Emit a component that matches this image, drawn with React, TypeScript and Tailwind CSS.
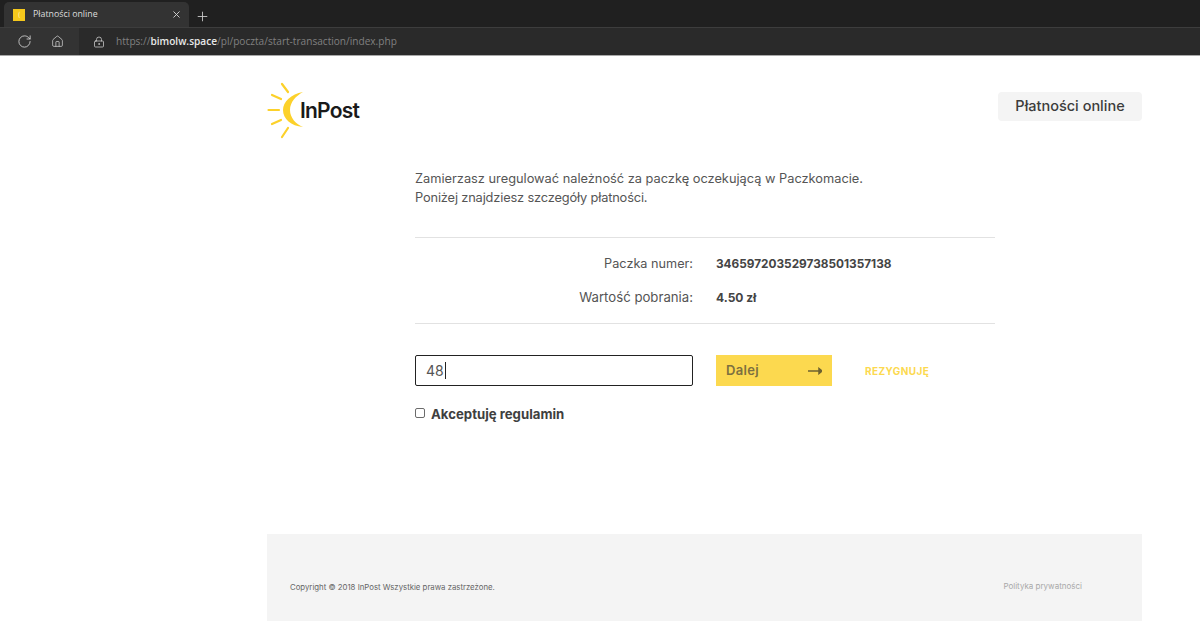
import React from "react";
import { RotateCw, Home, X, Plus, LockKeyhole } from "lucide-react";

const P = "font-['Inter','Liberation_Sans',sans-serif]";

function Logo() {
  return (
    <div className="relative w-[94px] h-[58px] flex items-center">
      <svg width="40" height="58" viewBox="0 0 40 58" className="shrink-0">
        <g stroke="#fcd12a" strokeWidth="2.2" strokeLinecap="round">
          <path d="M15 2 L21 10" />
          <path d="M5 13 L14 17" />
          <path d="M1.500 28 L12 28" />
          <path d="M5 42 L14 38" />
          <path d="M15 55 L21 46" />
        </g>
        <path d="M36 10 C24 12 16 20 16 28 C16 37 24 44 36 45 C29 42 23 36 23 28 C23 20 29 14 36 10 Z" fill="#fcd12a" />
      </svg>
      <span className="absolute left-[33px] top-[14px] text-[21px] leading-[30px] font-semibold tracking-[-0.8px] text-[#1a1a1a] font-['Inter',sans-serif]">InPost</span>
    </div>
  );
}

export default function App() {
  return (
    <div className={`${P} h-[621px] w-[1200px] overflow-hidden bg-white flex flex-col`}>
      <div className="h-[27px] bg-[#202020] flex items-end pl-[4px] shrink-0">
        <div className="h-[25px] w-[185px] bg-[#333333] rounded-t-[5px] flex items-center pl-[9px] pr-[7px]">
          <div className="w-[12px] h-[12px] bg-[#f5c81c] flex items-center justify-center text-[7px] leading-none text-[#fff2b0]">(</div>
          <span className="ml-[8px] text-[8.8px] text-[#dedede] font-['Open_Sans',sans-serif] flex-1">Płatności online</span>
          <X size={11} className="text-[#d8d8d8]" />
        </div>
        <Plus size={15} strokeWidth={1.4} className="text-[#cccccc] ml-[6px] mb-[3px]" />
      </div>
      <div className="h-[29px] bg-[#2d2d2d] flex items-center shrink-0 border-t border-[#3d3d3d] border-b-[1px] border-b-[#a8a8a8]">
        <div className="h-full w-[79px] bg-[#333333] flex items-center shrink-0">
          <RotateCw size={15} strokeWidth={1.4} className="text-[#d0d0d0] ml-[17px]" />
          <Home size={13} strokeWidth={1.4} className="text-[#d0d0d0] ml-[19px]" />
        </div>
        <div className="h-full flex-1 bg-[#2a2a2a] flex items-center pl-[14px]">
          <LockKeyhole size={12} strokeWidth={1.5} className="text-[#d0d0d0]" />
          <span className="ml-[11px] text-[10.1px] text-[#808080] font-['Open_Sans',sans-serif]">
            https://<span className="text-[#e8e8e8] font-semibold">bimolw.space</span>/pl/poczta/start-transaction/index.php
          </span>
        </div>
      </div>

      <div className="w-[875px] ml-[267px] flex flex-col flex-1">
        <div className="flex items-start justify-between mt-[26px] h-[58px]">
          <Logo />
          <div className="mt-[10px] w-[144px] h-[29px] pb-[1px] rounded-[4px] bg-[#f4f4f4] flex items-center justify-center text-[14.5px] font-medium text-[#3c3c3c]">
            Płatności online
          </div>
        </div>

        <div className="ml-[148px] w-[580px] flex flex-col mt-[29px]">
          <p className="text-[12.8px] leading-[19px] text-[#555555]">
            <span className="block">Zamierzasz uregulować należność za paczkę oczekującą w Paczkomacie.</span>
            <span className="block tracking-[-0.15px]">Poniżej znajdziesz szczegóły płatności.</span>
          </p>
          <div className="mt-[30px] border-t border-[#e2e2e2] pt-[17px] pb-[16px] border-b">
            <div className="flex items-center h-[18px]">
              <span className="w-[278px] text-right text-[12.7px] text-[#555555]">Paczka numer:</span>
              <span className="ml-[23px] pt-[1px] text-[11.8px] font-bold text-[#444]">346597203529738501357138</span>
            </div>
            <div className="flex items-center h-[18px] mt-[16px]">
              <span className="w-[278px] text-right text-[13.2px] text-[#555555]">Wartość pobrania:</span>
              <span className="ml-[23px] text-[12px] font-bold text-[#444]">4.50 zł</span>
            </div>
          </div>
          <div className="flex items-start mt-[31px]">
            <div className="w-[278px] h-[31px] border border-[#222] rounded-[2px] flex items-center pl-[10px] text-[14px] text-[#555]">
              48<span className="w-px h-[17px] bg-[#222] ml-[1px]" />
            </div>
            <div className="ml-[23px] w-[116px] h-[31px] bg-[#fcd94f] flex items-center justify-between pl-[10px] pr-[10px]">
              <span className="text-[13px] font-semibold text-[#7c7040] tracking-[0.3px]">Dalej</span>
              <svg width="14" height="8" viewBox="0 0 14 8"><path d="M0 4 H11 M11 1.500 L14 4 L11 6.500 Z" stroke="#6d6230" strokeWidth="1.500" fill="#6d6230" /></svg>
            </div>
            <span className="ml-[33px] mt-[9px] text-[10px] font-bold text-[#fcd94f] tracking-[0.4px]">REZYGNUJĘ</span>
          </div>
          <div className="flex items-center mt-[19px]">
            <input type="checkbox" readOnly className="w-[10px] h-[10px] mb-[3px] appearance-none border border-[#6b6b6b] rounded-[2px] bg-white" />
            <span className="ml-[6px] text-[13.2px] font-bold text-[#3f3f3f]">Akceptuję regulamin</span>
          </div>
        </div>

        <div className="mt-auto h-[87px] bg-[#f4f4f4] flex items-start justify-between pl-[23px] pr-[60px] pt-[48px]">
          <span className="text-[7.8px] text-[#666]">Copyright © 2018 InPost Wszystkie prawa zastrzeżone.</span>
          <span className="text-[8px] text-[#a8a8a8] -mt-[2px]">Polityka prywatności</span>
        </div>
      </div>
    </div>
  );
}
